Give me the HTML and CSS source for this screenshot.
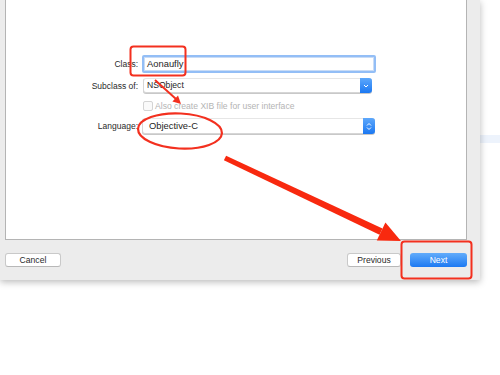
FILE: index.html
```html
<!DOCTYPE html>
<html lang="en">

<head>
    <meta charset="UTF-8">
    <meta name="viewport" content="width=device-width, initial-scale=1.0">
    <title>New File</title>
    <link rel="stylesheet" href="styles.css">
</head>

<body>
    <div class="backdrop-stripe"></div>
    <div class="window">
        <div class="panel">
            <div class="form">
                <div class="row row-class">
                    <label class="label">Class:</label>
                    <div class="field">Aonaufly</div>
                </div>
                <div class="row row-sub">
                    <label class="label">Subclass of:</label>
                    <div class="popup popup-sub">
                        <span class="popup-text">NSObject</span>
                        <span class="popup-btn">
                            <svg width="6" height="4" viewBox="0 0 6 4"><path d="M1 1 L3 3 L5 1" fill="none" stroke="#fff" stroke-width="1"/></svg>
                        </span>
                    </div>
                </div>
                <div class="row row-check">
                    <span class="label"></span>
                    <div class="check">
                        <span class="box"></span>
                        <span class="check-text">Also create XIB file for user interface</span>
                    </div>
                </div>
                <div class="row row-lang">
                    <label class="label">Language:</label>
                    <div class="popup popup-lang">
                        <span class="popup-text">Objective-C</span>
                        <span class="popup-btn">
                            <svg width="6" height="9" viewBox="0 0 6 9"><path d="M1 3.5 L3 1.5 L5 3.5 M1 5.5 L3 7.5 L5 5.5" fill="none" stroke="#fff" stroke-width="1"/></svg>
                        </span>
                    </div>
                </div>
            </div>
        </div>
        <div class="footer">
            <button class="btn btn-cancel">Cancel</button>
            <div class="footer-right">
                <button class="btn btn-prev">Previous</button>
                <button class="btn btn-next">Next</button>
            </div>
        </div>
    </div>

    <!-- red annotations drawn on top of the screenshot -->
    <svg class="marks" width="500" height="375" viewBox="0 0 500 375">
        <rect x="130.5" y="46.5" width="55" height="29" rx="3" fill="none" stroke="#f3301f" stroke-width="2"/>
        <line x1="155" y1="80" x2="176" y2="99" stroke="#f3301f" stroke-width="2"/>
        <polygon points="181,104 172.4,101.4 178,95.6" fill="#f3301f"/>
        <ellipse cx="180" cy="131" rx="42" ry="17.5" transform="rotate(3 180 131)" fill="none" stroke="#f3301f" stroke-width="2.2"/>
        <polygon points="223.9,160.3 226.1,155.7 382.5,228.4 379.5,234.8" fill="#f8290f"/>
        <polygon points="401,241 376.8,240.6 385.4,222.6" fill="#f8290f"/>
        <rect x="401.5" y="241.5" width="70" height="37" rx="3" fill="none" stroke="#f3301f" stroke-width="2"/>
    </svg>
</body>

</html>
```

FILE: styles.css
```css
* {
    margin: 0;
    padding: 0;
    box-sizing: border-box;
}
body {
    width: 500px;
    height: 375px;
    background: #fff;
    font-family: "Liberation Sans", Arial, sans-serif;
    overflow: hidden;
    position: relative;
}
.backdrop-stripe {
    position: absolute;
    left: 480px;
    top: 135px;
    width: 20px;
    height: 8px;
    background: #edf3fc;
}
.window {
    position: relative;
    width: 480px;
    height: 280px;
    background: #ececec;
    box-shadow: 0 2px 7px rgba(0, 0, 0, 0.28);
}
.panel {
    margin-left: 5px;
    width: 462px;
    height: 240px;
    background: #fff;
    border: 1px solid #b4b4b4;
    border-top: none;
    padding-top: 55px;
}
.row {
    display: flex;
    align-items: center;
}
.label {
    width: 132px;
    text-align: right;
    font-size: 8.5px;
    color: #2a2a2a;
    margin-right: 4px;
}
.row-class {
    height: 18px;
}
.field {
    width: 234px;
    height: 18px;
    border: 2px solid #93bef6;
    box-shadow: inset 0 0 0 1px #c9dcf6;
    border-radius: 2px;
    font-size: 9.4px;
    color: #1e1e1e;
    padding-left: 3px;
    line-height: 14px;
}
.row-sub {
    margin-top: 5px;
    height: 15px;
}
.popup {
    display: flex;
    align-items: stretch;
    background: #fff;
    border: 1px solid #d6d6d6;
    border-top-color: #e6e6e6;
    border-radius: 3px;
    box-shadow: 0 1px 0 #c8c8c8;
}
.popup-sub {
    width: 229px;
    height: 15px;
    margin-left: 1px;
}
.popup-text {
    flex: 1;
    font-size: 8.6px;
    color: #1e1e1e;
    padding-left: 3px;
    line-height: 13px;
}
.popup-btn {
    width: 12px;
    display: flex;
    align-items: center;
    justify-content: center;
    background: linear-gradient(#5ea8fb, #1b78f2);
    border-radius: 0 3px 3px 0;
    margin: -1px -1px -1px 0;
}
.row-check {
    margin-top: 7px;
    height: 12px;
}
.check {
    display: flex;
    align-items: center;
    margin-left: 1px;
}
.box {
    width: 10px;
    height: 10px;
    border: 1px solid #d4d4d4;
    border-radius: 2px;
    background: #fafafa;
    margin-right: 2px;
}
.check-text {
    font-size: 8.6px;
    color: #b4b4b4;
}
.row-lang {
    margin-top: 6px;
    height: 16px;
}
.popup-lang {
    width: 233px;
    height: 16px;
}
.popup-lang .popup-text {
    font-size: 9.4px;
    padding-left: 6px;
    line-height: 14px;
}
.footer {
    display: flex;
    justify-content: space-between;
    padding: 13px 13px 0 5px;
}
.footer-right {
    display: flex;
    gap: 9px;
}
.btn {
    height: 14px;
    border: 1px solid #c9c9c9;
    border-bottom-color: #b8b8b8;
    border-radius: 3px;
    background: #fff;
    font-family: "Liberation Sans", Arial, sans-serif;
    font-size: 8.6px;
    color: #2a2a2a;
    line-height: 12px;
}
.btn-cancel {
    width: 56px;
}
.btn-prev {
    width: 54px;
}
.btn-next {
    width: 57px;
    border: none;
    background: linear-gradient(#62acfb, #1c79f2);
    color: #fff;
}
.marks {
    position: absolute;
    left: 0;
    top: 0;
    pointer-events: none;
}
```
